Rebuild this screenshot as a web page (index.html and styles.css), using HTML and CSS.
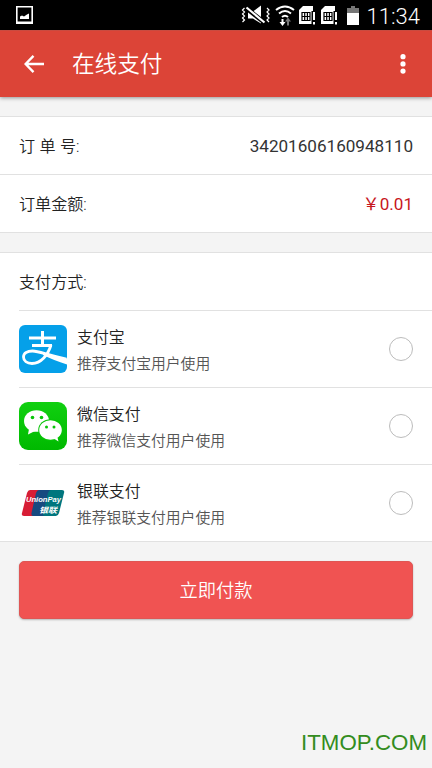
FILE: index.html
```html
<!DOCTYPE html>
<html lang="zh-CN">
<head>
<meta charset="utf-8">
<title>在线支付</title>
<link rel="stylesheet" href="styles.css">
</head>
<body>
<header class="status">
  <svg class="status-photo" width="17" height="18" viewBox="0 0 17 18"><path d="M.8.8h15.400v16.400H.8z" fill="none" stroke="#fff" stroke-width="1.600"/><path d="M0 15.500h17V18H0zM4 10.500l2-1 2 1 3-2 2-1V13H4z" fill="#fff"/></svg>
  <svg class="status-icons" width="120" height="24" viewBox="0 0 120 24">
    <g fill="none" stroke="#fff" stroke-width="1.200"><path d="M4.500 5l-2 2 2 2-2 2 2 2-2 2 2 2-2 2M27 5l2 2-2 2 2 2-2 2 2 2-2 2 2 2"/></g>
    <path d="M8 8.500h5l8-6v18l-8-5H8z" fill="#fff"/>
    <path d="M6 5l19 15" stroke="#000" stroke-width="4.500"/><path d="M6.500 4.500l18 15" stroke="#fff" stroke-width="2.200"/>
    <g fill="none" stroke="#fff" stroke-width="2"><path d="M36 7q9-7 18 0M39 10.500q6-5 12 0M42 14q3-2.500 6 0"/></g>
    <path d="M41.500 16h2v3h2l-3 4-3-4h2z" fill="#fff"/><path d="M47 22.500h2v-4h2l-3-4-3 4h2z" fill="#777"/>
    <g id="sim"><path d="M63 3h10v18H59V7z" fill="#fff"/><path d="M62 9.500h8v8h-8zM64.700 9.500v8M67.400 9.500v8M62 13.500h8" fill="none" stroke="#000" stroke-width="1.200"/><path d="M71.500 8H76v14h-4.500z" fill="#000"/><path d="M73 9h2v8h-2zM73 19h2v2.500h-2z" fill="#fff"/></g>
    <use href="#sim" x="22"/>
    <path d="M111 3h4v2h4v6h-12V5h4z" fill="#777"/><path d="M107 10h12v12h-12z" fill="#fff"/>
  </svg>
  <span class="clock">11:34</span>
</header>
<div class="appbar">
  <svg class="back" width="20" height="18" viewBox="0 0 20 18"><path d="M9.500 .9L1.600 9l7.900 8.100M1.800 9H20" fill="none" stroke="#fff" stroke-width="2.400"/></svg>
  <h1>在线支付</h1>
  <svg class="more" width="6" height="20" viewBox="0 0 6 20" fill="#fff"><circle cx="3" cy="2.700" r="2.600"/><circle cx="3" cy="9.900" r="2.600"/><circle cx="3" cy="17.100" r="2.600"/></svg>
</div>
<main>
  <section class="card">
    <div class="row"><span class="spread">订 单 号:</span><span class="number">34201606160948110</span></div>
    <div class="row"><span>订单金额:</span><span class="price">￥0.01</span></div>
  </section>
  <section class="card methods">
    <div class="row">支付方式:</div>
    <div class="method">
      <svg class="logo" viewBox="0 0 48 48"><rect width="48" height="48" rx="6" fill="#05a0e9"/><path d="M10 13h27M13 20.500h20M23.500 6v15" stroke="#fff" stroke-width="3" fill="none"/><path d="M32 20C29 30 22 38.500 13 38.500 8 38.500 4.500 36 4.500 32c0-4 4-6 9-6 7 0 14 4 34 8" fill="none" stroke="#fff" stroke-width="2.800"/><path d="M24 28.500c9 3 17 4 24 5v6c-9-3-17-6-24-9.500z" fill="#fff"/></svg>
      <div class="copy"><h2>支付宝</h2><p>推荐支付宝用户使用</p></div><span class="radio"></span>
    </div>
    <div class="method">
      <svg class="logo" viewBox="0 0 48 48"><defs><linearGradient id="green" x2="0" y2="1"><stop stop-color="#10d010"/><stop offset="1" stop-color="#00b900"/></linearGradient></defs><rect width="48" height="48" rx="9" fill="url(#green)"/><path d="M10 27l-1 5.500L16 29z" fill="#fff"/><ellipse cx="17.500" cy="19" rx="12.500" ry="10.800" fill="#fff"/><ellipse cx="31.500" cy="28" rx="12.300" ry="10.800" fill="#08c508"/><ellipse cx="31.500" cy="28" rx="11.300" ry="9.800" fill="#fff"/><path d="M34 36l5.500 3.500-1.500-6z" fill="#fff"/><g fill="#08c508"><circle cx="13.500" cy="15.500" r="1.800"/><circle cx="22.500" cy="15.500" r="1.800"/><circle cx="27.500" cy="25" r="1.500"/><circle cx="35" cy="25" r="1.500"/></g></svg>
      <div class="copy"><h2>微信支付</h2><p>推荐微信支付用户使用</p></div><span class="radio"></span>
    </div>
    <div class="method">
      <svg class="logo" viewBox="0 0 48 48"><path d="M11 11h14l-6 26H5q-3 0-2-3l5-20q1-3 3-3z" fill="#d71d35"/><path d="M20 11h14l-6 26H14q-2 0-1.500-3L17 14q1-3 3-3z" fill="#174a80"/><path d="M32 11h11q3 0 2 3l-5 20q-1 3-3 3H26q-3 0-2-3l5-20q1-3 3-3z" fill="#00767e"/><text class="union" x="7" y="23" textLength="35" lengthAdjust="spacingAndGlyphs">UnionPay</text><text class="yinlian" x="20" y="34" textLength="18" lengthAdjust="spacingAndGlyphs">银联</text></svg>
      <div class="copy"><h2>银联支付</h2><p>推荐银联支付用户使用</p></div><span class="radio"></span>
    </div>
  </section>
  <button class="pay">立即付款</button>
</main>
<footer class="watermark">ITMOP.COM</footer>
</body>
</html>
```
FILE: styles.css
```css
* { box-sizing: border-box; }
body { margin: 0; height: 768px; display: flex; flex-direction: column; overflow: hidden; background: #f4f4f4; color: #222; font: 350 16px/24px Roboto, "Noto Sans CJK SC", sans-serif; }
h1, h2, p { margin: 0; font-weight: inherit; }
svg { display: block; flex: none; }
.status { height: 30px; background: #000; color: #fff; display: flex; align-items: center; padding: 0 12px 0 16px; }
.status-icons { margin-left: auto; }
.clock { width: 54px; margin-left: 6px; font-size: 22px; line-height: 30px; text-align: right; white-space: nowrap; padding-top: 3px; font-weight: 350; }
.appbar { height: 67px; background: #dc4437; color: #fff; display: flex; align-items: center; padding: 0 26px 0 24px; box-shadow: 0 1px 4px rgba(0,0,0,.4); border-top: 1px solid #c94b40; }
.appbar h1 { margin-left: 28px; padding-top: 2px; font-size: 22.600px; line-height: 32px; font-weight: 350; }
.more { margin-left: auto; }
.card { margin-top: 19px; background: #fff; border: solid #e1e1e1; border-width: 1px 0; }
.row { height: 57px; padding: 2px 19px 0; display: flex; align-items: center; justify-content: space-between; font-size: 16.100px; }
.row + .row { height: 58px; border-top: 1px solid #e1e1e1; }
.spread { word-spacing: .5px; }
.number, .price { padding-bottom: 2px; font-size: 17.100px; font-weight: 400; }
.number { color: #333; }
.price { color: #c7161d; }
.method { height: 77px; margin-left: 19px; padding-right: 19px; border-top: 1px solid #e1e1e1; display: flex; align-items: center; }
.logo { width: 48px; height: 48px; }
.copy { margin-left: 10px; padding-top: 3px; }
.copy h2 { font-size: 15.900px; line-height: 26px; }
.copy p { font-size: 14.800px; line-height: 26px; color: #555; }
.radio { margin-left: auto; width: 24px; height: 24px; border: 1px solid #bcbcbc; border-radius: 50%; }
.union { font: italic bold 8px/8px "Liberation Sans", sans-serif; fill: #fff; }
.yinlian { font: italic bold 7.800px/8px "Noto Sans CJK SC", sans-serif; fill: #fff; }
.pay { display: block; width: 394px; height: 58px; margin: 19px; padding: 2px 0 0; border: 1px solid #df5654; border-radius: 5px; background: #f05352; color: #fff; font: 350 18.300px/28px Roboto, "Noto Sans CJK SC", sans-serif; box-shadow: 0 1px 2px rgba(0,0,0,.25); }
.watermark { margin: auto 5px 12px auto; color: #338c20; font: 22.300px/26px "Liberation Sans", sans-serif; }
```
